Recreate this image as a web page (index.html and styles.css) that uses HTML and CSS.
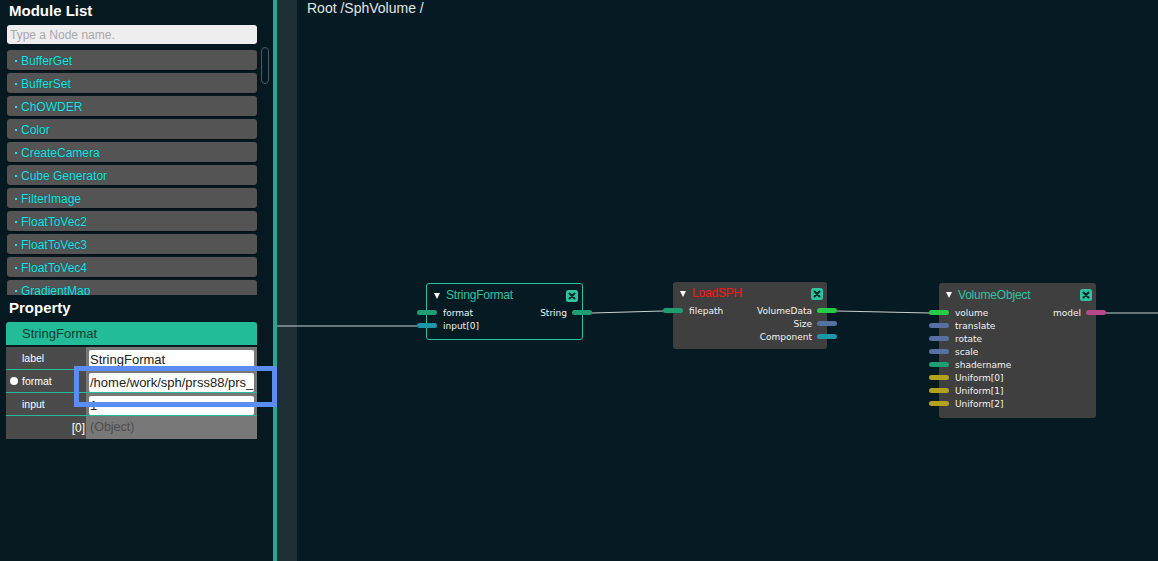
FILE: index.html
```html
<!DOCTYPE html>
<html>
<head>
<meta charset="utf-8">
<link rel="stylesheet" href="styles.css">
</head>
<body>
<div class="app">
  <aside class="sidebar">
    <h2 class="panel-title">Module List</h2>
    <input class="search" type="text" placeholder="Type a Node name.">
    <div class="list-wrap">
      <ul class="module-list">
        <li class="module"><span class="dot"></span>BufferGet</li>
        <li class="module"><span class="dot"></span>BufferSet</li>
        <li class="module"><span class="dot"></span>ChOWDER</li>
        <li class="module"><span class="dot"></span>Color</li>
        <li class="module"><span class="dot"></span>CreateCamera</li>
        <li class="module"><span class="dot"></span>Cube Generator</li>
        <li class="module"><span class="dot"></span>FilterImage</li>
        <li class="module"><span class="dot"></span>FloatToVec2</li>
        <li class="module"><span class="dot"></span>FloatToVec3</li>
        <li class="module"><span class="dot"></span>FloatToVec4</li>
        <li class="module"><span class="dot"></span>GradientMap</li>
      </ul>
      <div class="scrollbar"></div>
    </div>
    <h2 class="panel-title prop-title">Property</h2>
    <div class="prop-header">StringFormat</div>
    <div class="prop-table">
      <div class="prop-row">
        <div class="prop-key">label</div>
        <div class="prop-val"><div class="field">StringFormat</div></div>
      </div>
      <div class="prop-row">
        <div class="prop-key"><span class="bullet"></span>format</div>
        <div class="prop-val"><div class="field">/home/work/sph/prss88/prs_</div></div>
      </div>
      <div class="prop-row">
        <div class="prop-key">input</div>
        <div class="prop-val"><div class="field">1</div></div>
      </div>
      <div class="prop-row last">
        <div class="prop-key right">[0]</div>
        <div class="prop-val object">(Object)</div>
      </div>
    </div>
  </aside>
  <div class="splitter"></div>
  <div class="strip"></div>
  <main class="canvas">
    <div class="breadcrumb">Root /SphVolume /</div>
    <svg class="wires" width="861" height="561" viewBox="0 0 861 561">
      <line x1="-20" y1="326" x2="120" y2="326"/>
      <line x1="295" y1="313" x2="366" y2="311"/>
      <line x1="540" y1="311" x2="633" y2="313"/>
      <line x1="808" y1="313" x2="861" y2="313"/>
    </svg>

    <div class="node sel n-string">
      <div class="node-head">
        <span class="tri"></span><span class="node-title">StringFormat</span>
        <svg class="close" width="12" height="12" viewBox="0 0 12 12"><rect width="12" height="12" rx="2.5" fill="#2ec4a0"/><path d="M3.5 3.5L8.5 8.5M8.5 3.5L3.5 8.5" stroke="#0a2626" stroke-width="2" stroke-linecap="round"/></svg>
      </div>
      <div class="ports">
        <div class="ins">
          <div class="port in"><span class="pill c-green"></span><span class="plabel">format</span></div>
          <div class="port in"><span class="pill c-teal"></span><span class="plabel">input[0]</span></div>
        </div>
        <div class="outs">
          <div class="port out"><span class="plabel">String</span><span class="pill c-green"></span></div>
        </div>
      </div>
    </div>

    <div class="node plain n-load">
      <div class="node-head">
        <span class="tri"></span><span class="node-title red">LoadSPH</span>
        <svg class="close" width="12" height="12" viewBox="0 0 12 12"><rect width="12" height="12" rx="2.5" fill="#2ec4a0"/><path d="M3.5 3.5L8.5 8.5M8.5 3.5L3.5 8.5" stroke="#0a2626" stroke-width="2" stroke-linecap="round"/></svg>
      </div>
      <div class="ports">
        <div class="ins">
          <div class="port in"><span class="pill c-green"></span><span class="plabel">filepath</span></div>
        </div>
        <div class="outs">
          <div class="port out"><span class="plabel">VolumeData</span><span class="pill c-lime"></span></div>
          <div class="port out"><span class="plabel">Size</span><span class="pill c-blue"></span></div>
          <div class="port out"><span class="plabel">Component</span><span class="pill c-teal"></span></div>
        </div>
      </div>
    </div>

    <div class="node plain n-volume">
      <div class="node-head">
        <span class="tri"></span><span class="node-title">VolumeObject</span>
        <svg class="close" width="12" height="12" viewBox="0 0 12 12"><rect width="12" height="12" rx="2.5" fill="#2ec4a0"/><path d="M3.5 3.5L8.5 8.5M8.5 3.5L3.5 8.5" stroke="#0a2626" stroke-width="2" stroke-linecap="round"/></svg>
      </div>
      <div class="ports">
        <div class="ins">
          <div class="port in"><span class="pill c-lime"></span><span class="plabel">volume</span></div>
          <div class="port in"><span class="pill c-blue"></span><span class="plabel">translate</span></div>
          <div class="port in"><span class="pill c-blue"></span><span class="plabel">rotate</span></div>
          <div class="port in"><span class="pill c-blue"></span><span class="plabel">scale</span></div>
          <div class="port in"><span class="pill c-green"></span><span class="plabel">shadername</span></div>
          <div class="port in"><span class="pill c-olive"></span><span class="plabel">Uniform[0]</span></div>
          <div class="port in"><span class="pill c-olive"></span><span class="plabel">Uniform[1]</span></div>
          <div class="port in"><span class="pill c-olive"></span><span class="plabel">Uniform[2]</span></div>
        </div>
        <div class="outs">
          <div class="port out"><span class="plabel">model</span><span class="pill c-pink"></span></div>
        </div>
      </div>
    </div>
  </main>
  <div class="highlight"></div>
</div>
</body>
</html>
```

FILE: styles.css
```css
html, body {
  margin: 0;
  padding: 0;
}
body {
  width: 1158px;
  height: 561px;
  overflow: hidden;
  background: #061b23;
  font-family: "Liberation Sans", Arial, sans-serif;
}
.app {
  position: relative;
  display: flex;
  width: 1158px;
  height: 561px;
}

/* ---------- sidebar ---------- */
.sidebar {
  width: 273px;
  flex: 0 0 273px;
  background: #061820;
  display: flex;
  flex-direction: column;
}
.panel-title {
  margin: 0;
  padding: 2px 0 0 9px;
  font-size: 15px;
  line-height: 18px;
  font-weight: bold;
  color: #ffffff;
  flex: 0 0 auto;
}
.search {
  box-sizing: border-box;
  margin: 5px 0 0 7px;
  width: 250px;
  height: 19px;
  flex: 0 0 19px;
  border: none;
  outline: none;
  border-radius: 3px;
  background: #eeeeee;
  padding: 0 3px;
  font-family: "Liberation Sans", Arial, sans-serif;
  font-size: 12px;
  color: #333;
}
.search::placeholder {
  color: #a9a9a9;
}
.list-wrap {
  margin-top: 3px;
  height: 248px;
  flex: 0 0 248px;
  overflow: hidden;
  display: flex;
}
.module-list {
  list-style: none;
  margin: 0 0 0 7px;
  padding: 3px 0 0 0;
  width: 250px;
  display: flex;
  flex-direction: column;
  gap: 3px;
}
.module {
  flex: 0 0 20px;
  height: 20px;
  line-height: 23px;
  overflow: hidden;
  box-sizing: border-box;
  padding-left: 8px;
  border-radius: 3px;
  background: #545454;
  color: #1ce6e6;
  font-size: 12px;
  text-shadow: 0 0 1px #0a3a3a;
  box-shadow: 0 1px 1px rgba(0,0,0,0.35);
}
.dot {
  display: inline-block;
  width: 2px;
  height: 2px;
  background: #1ce6e6;
  margin-right: 4px;
  vertical-align: 3px;
}
.scrollbar {
  margin-left: 4px;
  width: 6px;
  height: 35px;
  border: 1px solid #4a5a60;
  border-radius: 4px;
}
.prop-title {
  margin-top: 2px;
}
.prop-header {
  margin: 5px 0 0 6px;
  width: 251px;
  height: 23px;
  flex: 0 0 23px;
  line-height: 23px;
  box-sizing: border-box;
  padding-left: 16px;
  background: #22bc98;
  border-radius: 3px 3px 0 0;
  color: #173a36;
  font-size: 13px;
}
.prop-table {
  margin: 2px 0 0 6px;
  width: 251px;
  display: flex;
  flex-direction: column;
}
.prop-row {
  display: flex;
  height: 23px;
  box-sizing: border-box;
  border-bottom: 1px solid #22bc98;
}
.prop-row.last {
  border-bottom: none;
}
.prop-key {
  width: 80px;
  flex: 0 0 80px;
  background: #4b4b4b;
  color: #ffffff;
  font-size: 10.5px;
  line-height: 22px;
  box-sizing: border-box;
  padding-left: 16px;
  position: relative;
  display: flex;
  align-items: center;
}
.prop-key.right {
  justify-content: flex-end;
  padding-right: 1px;
  font-size: 12px;
}
.bullet {
  position: absolute;
  left: 4px;
  top: 7px;
  width: 8px;
  height: 8px;
  border-radius: 50%;
  background: #ffffff;
}
.prop-val {
  flex: 1;
  background: #787878;
  padding: 3px 3px 0 3px;
  box-sizing: border-box;
}
.field {
  height: 19px;
  line-height: 19px;
  background: #ffffff;
  border-radius: 2px;
  padding-left: 1px;
  font-size: 13px;
  color: #222;
  white-space: nowrap;
  overflow: hidden;
}
.prop-val.object {
  padding: 0 0 0 4px;
  line-height: 23px;
  font-size: 12.5px;
  color: #4e4e4e;
}

/* ---------- splitter ---------- */
.splitter {
  flex: 0 0 4px;
  background: #29a595;
}
.strip {
  flex: 0 0 20px;
  background: #1e2f36;
}

/* ---------- canvas ---------- */
.canvas {
  position: relative;
  flex: 1;
  background: #051a22;
}
.breadcrumb {
  padding-left: 10px;
  font-size: 14px;
  line-height: 16px;
  color: #e4e4e4;
}
.wires {
  position: absolute;
  left: 0;
  top: 0;
  overflow: visible;
}
.wires line {
  stroke: #c9d0d2;
  stroke-width: 1;
}

.node {
  position: absolute;
  box-sizing: border-box;
  border-radius: 3px;
  display: flex;
  flex-direction: column;
}
.node.sel {
  border: 1.5px solid #2bbf9e;
  background: #051a22;
}
.node.plain {
  background: #3f3f3f;
}
.n-string {
  left: 129px;
  top: 283px;
  width: 157px;
  height: 57px;
}
.n-load {
  left: 376px;
  top: 282px;
  width: 154px;
  height: 67px;
}
.n-volume {
  left: 642px;
  top: 283px;
  width: 157px;
  height: 135px;
}
.node-head {
  height: 22px;
  display: flex;
  align-items: center;
  padding-left: 7px;
}
.n-volume .node-head {
  height: 23px;
}
.tri {
  width: 0;
  height: 0;
  border-left: 3.5px solid transparent;
  border-right: 3.5px solid transparent;
  border-top: 6px solid #ffffff;
  margin-right: 6px;
  margin-top: 1px;
}
.node-title {
  font-size: 12px;
  line-height: 22px;
  color: #2fc2a2;
  letter-spacing: -0.2px;
}
.node-title.red {
  color: #ff1414;
}
.close {
  margin-left: auto;
  margin-right: 4px;
  margin-top: 1px;
}
.ports {
  display: flex;
  justify-content: space-between;
}
.ins, .outs {
  display: flex;
  flex-direction: column;
}
.port {
  height: 13px;
  display: flex;
  align-items: center;
  font-family: "DejaVu Sans", sans-serif;
  font-size: 9px;
  color: #f2f2f2;
}
.port.out {
  justify-content: flex-end;
}
.pill {
  width: 20px;
  height: 5px;
  border-radius: 3px;
  flex: 0 0 20px;
}
.port.in .pill {
  margin-left: -10px;
  margin-right: 6px;
}
.port.out .pill {
  margin-left: 5px;
  margin-right: -10px;
}
.c-green { background: #1f9e72; }
.c-teal { background: #1b97a8; }
.c-lime { background: #27cc46; }
.c-blue { background: #5670a2; }
.c-olive { background: #b3a21e; }
.c-pink { background: #b8488a; }

/* ---------- highlight overlay ---------- */
.highlight {
  position: absolute;
  left: 74px;
  top: 366px;
  width: 203px;
  height: 41px;
  box-sizing: border-box;
  border: 5px solid #5a8cf2;
  pointer-events: none;
}
```
